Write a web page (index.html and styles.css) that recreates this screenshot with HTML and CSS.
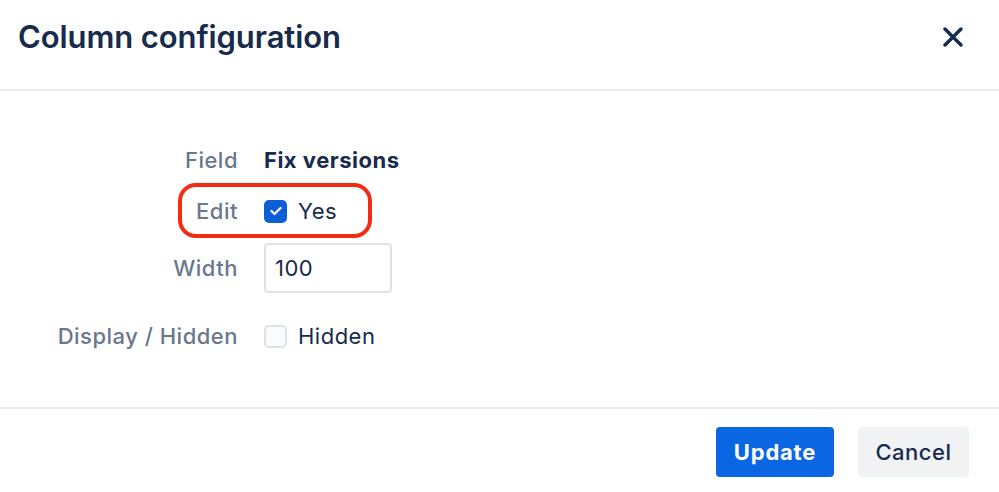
FILE: index.html
```html
<!DOCTYPE html>
<html lang="en">
  <head>
    <meta charset="UTF-8" />
    <title>Column configuration</title>
    <link rel="stylesheet" href="styles.css">
  </head>

  <body>
    <div id="dialog">
      <div id="dialog-header">
        <h1>Column configuration</h1>
        <button class="close" aria-label="Close">
          <svg width="20" height="20" viewBox="0 0 20 20">
            <path d="M2 2 L18 18 M18 2 L2 18" stroke="#172b4d" stroke-width="3.4" stroke-linecap="round" />
          </svg>
        </button>
      </div>

      <div id="dialog-body">
        <div class="form-grid">
          <div class="label">Field</div>
          <div class="value strong">Fix versions</div>

          <div class="label">Edit</div>
          <div class="value">
            <span class="checkbox checked">
              <svg width="12" height="10" viewBox="0 0 12 10">
                <path d="M1.5 5 L4.5 8 L10.5 2" fill="none" stroke="#fff" stroke-width="2.2" stroke-linecap="round" stroke-linejoin="round" />
              </svg>
            </span>
            Yes
          </div>

          <div class="label">Width</div>
          <div class="value">
            <input type="text" value="100" class="width-input" />
          </div>

          <div class="label">Display / Hidden</div>
          <div class="value">
            <span class="checkbox"></span>
            Hidden
          </div>
        </div>
        <div class="highlight"></div>
      </div>

      <div id="dialog-footer">
        <button class="btn primary">Update</button>
        <button class="btn subtle">Cancel</button>
      </div>
    </div>
  </body>
</html>
```

FILE: styles.css
```css
html {
  box-sizing: border-box;
  font-family: Inter, "Noto Sans", sans-serif;
  color: #172b4d;
}
*,
*:before,
*:after {
  box-sizing: inherit;
}

body {
  margin: 0;
  padding: 0;
  background: #fff;
}

#dialog {
  width: 999px;
  height: 492px;
  display: flex;
  flex-direction: column;
}

#dialog-header {
  height: 91px;
  padding: 17px 36px 0 18px;
  display: flex;
  justify-content: space-between;
  align-items: flex-start;
  border-bottom: 2px solid #ebecf0;
}

h1 {
  margin: 0;
  font-size: 31px;
  font-weight: 600;
  line-height: 40px;
  letter-spacing: -0.1px;
}

.close {
  border: none;
  background: none;
  padding: 0;
  margin-top: 10px;
  cursor: pointer;
  display: flex;
}

#dialog-body {
  position: relative;
  height: 316px;
  padding-top: 44px;
}

.form-grid {
  display: grid;
  grid-template-columns: 238px auto;
  grid-template-rows: 50px 52px 62px 74px;
  column-gap: 26px;
  align-items: center;
  font-size: 22px;
  letter-spacing: 0.5px;
}

.label {
  text-align: right;
  color: #6b778c;
  font-weight: 500;
}

.value {
  display: flex;
  align-items: center;
  gap: 11px;
}

.strong {
  font-weight: 700;
}

.checkbox {
  width: 23px;
  height: 23px;
  border-radius: 5px;
  border: 2px solid #dfe1e6;
  background: #fafbfc;
  display: flex;
  align-items: center;
  justify-content: center;
}

.checkbox.checked {
  border: none;
  background: #0c5fd6;
}

.width-input {
  width: 128px;
  height: 50px;
  border: 2px solid #dfe1e6;
  border-radius: 4px;
  padding: 0 9px;
  font-family: inherit;
  font-size: 22px;
  letter-spacing: 0.5px;
  color: #172b4d;
  background: #fff;
}

.highlight {
  position: absolute;
  left: 178px;
  top: 92px;
  width: 194px;
  height: 55px;
  border: 4px solid #f42a12;
  border-radius: 18px;
}

#dialog-footer {
  border-top: 2px solid #ebecf0;
  padding: 18px 30px 0 0;
  display: flex;
  justify-content: flex-end;
  gap: 24px;
}

.btn {
  height: 50px;
  border: none;
  border-radius: 4px;
  font-family: inherit;
  font-size: 22px;
  letter-spacing: 0.5px;
  padding: 0;
  cursor: pointer;
}

.primary {
  width: 118px;
  background: #0b66e4;
  color: #fff;
  font-weight: 700;
  letter-spacing: 0.8px;
}

.subtle {
  width: 111px;
  background: #f1f2f4;
  color: #172b4d;
  font-weight: 500;
}
```
